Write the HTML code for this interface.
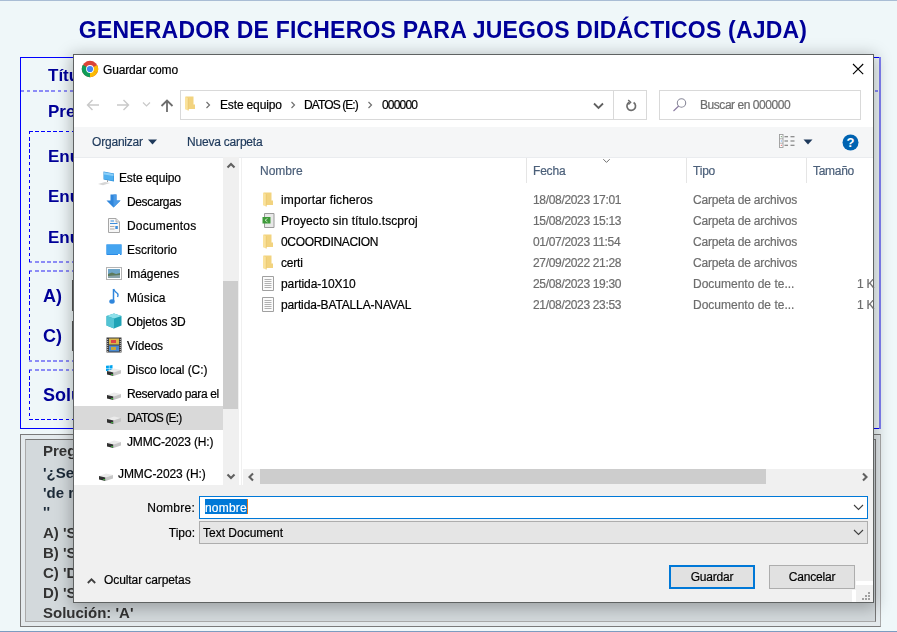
<!DOCTYPE html>
<html><head><meta charset="utf-8">
<style>
*{margin:0;padding:0;box-sizing:border-box}
html,body{width:897px;height:632px;overflow:hidden}
body{position:relative;background:#eff7f9;font-family:"Liberation Sans",sans-serif}
.a{position:absolute}
.gb{will-change:transform;font-size:15px;font-weight:bold;line-height:16px;white-space:nowrap}
.pg{will-change:transform;font-weight:bold;color:#000099;white-space:nowrap}
.t{will-change:transform;-webkit-text-stroke:0.2px currentColor;font-size:12px;line-height:16px;white-space:nowrap;color:#000}
.dlg{font-family:"Liberation Sans",sans-serif;font-size:12px;white-space:nowrap;color:#000}
</style></head><body>
<!-- background page -->
<div class="a" style="left:0;top:0;width:897px;height:1px;background:#a9bdd5"></div>
<div class="a pg" style="left:0;top:17px;width:886px;text-align:center;font-size:23px;line-height:26px;letter-spacing:0.2px">GENERADOR DE FICHEROS PARA JUEGOS DIDÁCTICOS (AJDA)</div>
<div class="a" style="left:20px;top:57px;width:860px;height:372px;border:1px solid #0000ff;border-right:none"></div>
<div class="a" style="left:879px;top:57px;width:2px;height:372px;background:#8080f4"></div>
<div class="a pg" style="left:48px;top:66px;font-size:17px">Títu</div>
<div class="a" style="left:21px;top:90px;width:859px;height:2px;background:repeating-linear-gradient(90deg,#8c8cf6 0 3.4px,transparent 3.4px 6.1px)"></div>
<div class="a pg" style="left:48px;top:102px;font-size:17px">Pre</div>
<div class="a" style="left:29px;top:131px;width:845px;height:1px;background:repeating-linear-gradient(90deg,#0000ff 0 3.6px,transparent 3.6px 6.1px)"></div>
<div class="a" style="left:29px;top:261px;width:845px;height:2px;background:repeating-linear-gradient(90deg,#8c8cf6 0 3.4px,transparent 3.4px 6.1px)"></div>
<div class="a" style="left:29px;top:131px;width:1px;height:131px;background:repeating-linear-gradient(180deg,#0000ff 0 3.4px,transparent 3.4px 6.1px)"></div>
<div class="a" style="left:873px;top:131px;width:1px;height:131px;background:repeating-linear-gradient(180deg,#0000ff 0 3.4px,transparent 3.4px 6.1px)"></div>
<div class="a pg" style="left:48px;top:147px;font-size:17px">Enu</div>
<div class="a pg" style="left:48px;top:187px;font-size:17px">Enu</div>
<div class="a pg" style="left:48px;top:228px;font-size:17px">Enu</div>
<div class="a" style="left:29px;top:270px;width:845px;height:2px;background:repeating-linear-gradient(90deg,#8c8cf6 0 3.4px,transparent 3.4px 6.1px)"></div>
<div class="a" style="left:29px;top:360px;width:845px;height:2px;background:repeating-linear-gradient(90deg,#8c8cf6 0 3.4px,transparent 3.4px 6.1px)"></div>
<div class="a" style="left:29px;top:271px;width:1px;height:90px;background:repeating-linear-gradient(180deg,#0000ff 0 3.4px,transparent 3.4px 6.1px)"></div>
<div class="a" style="left:873px;top:271px;width:1px;height:90px;background:repeating-linear-gradient(180deg,#0000ff 0 3.4px,transparent 3.4px 6.1px)"></div>
<div class="a pg" style="left:43px;top:286px;font-size:18px">A)</div>
<div class="a pg" style="left:43px;top:326px;font-size:18px">C)</div>
<div class="a" style="left:72px;top:280px;width:2px;height:31px;background:#555"></div>
<div class="a" style="left:72px;top:321px;width:2px;height:30px;background:#555"></div>
<div class="a" style="left:29px;top:369px;width:845px;height:2px;background:repeating-linear-gradient(90deg,#8c8cf6 0 3.4px,transparent 3.4px 6.1px)"></div>
<div class="a" style="left:29px;top:419px;width:845px;height:1px;background:repeating-linear-gradient(90deg,#0000ff 0 3.6px,transparent 3.6px 6.1px)"></div>
<div class="a" style="left:29px;top:370px;width:1px;height:50px;background:repeating-linear-gradient(180deg,#0000ff 0 3.4px,transparent 3.4px 6.1px)"></div>
<div class="a" style="left:873px;top:370px;width:1px;height:50px;background:repeating-linear-gradient(180deg,#0000ff 0 3.4px,transparent 3.4px 6.1px)"></div>
<div class="a pg" style="left:43px;top:385px;font-size:18px">Solu</div>
<!-- gray box -->
<div class="a" style="left:20px;top:434px;width:861px;height:193px;border:1px solid #7a7a7a;border-right-color:#aaa;background:#e4eaed"></div>
<div class="a" style="left:25px;top:439px;width:851px;height:183px;border:1px solid #aaa;border-top-color:#777;border-right-color:#777;background:#d3d9dc"></div>
<div class="a gb" style="left:43px;top:443px;color:#333">Preg</div>
<div class="a gb" style="left:43px;top:465px;color:#1c2a38">'¿Se</div>
<div class="a gb" style="left:43px;top:485px;color:#1c2a38">'de r</div>
<div class="a gb" style="left:43px;top:504px;color:#1c2a38">''</div>
<div class="a gb" style="left:43px;top:525px;color:#333">A) 'S</div>
<div class="a gb" style="left:43px;top:545px;color:#333">B) 'S</div>
<div class="a gb" style="left:43px;top:565px;color:#333">C) 'D</div>
<div class="a gb" style="left:43px;top:585px;color:#333">D) 'S</div>
<div class="a gb" style="left:43px;top:605px;color:#333">Solución: 'A'</div>
<div class="a" style="left:0;top:631px;width:897px;height:1px;background:#7d9cc0"></div>
<!-- dialog -->
<div class="a" style="left:73px;top:54px;width:801px;height:549px;background:#fff;border:1px solid #5f6262;box-shadow:0 3px 15px 2px rgba(0,0,0,0.27)"></div>
<!-- title bar -->
<svg class="a" style="left:81px;top:60px" width="18" height="18" viewBox="0 0 18 18">
  <circle cx="9" cy="9" r="8.2" fill="#db4437"/>
  <path d="M9 9 L16.1 13.1 A8.2 8.2 0 0 1 9 17.2 Z" fill="#fbbc05"/>
  <path d="M9 9 L9 17.2 A8.2 8.2 0 0 1 1.9 13.1 L1.9 4.9 Z" fill="#0f9d58"/>
  <path d="M9 9 L1.9 4.9 A8.2 8.2 0 0 0 1.9 13.1 Z" fill="#0f9d58"/>
  <path d="M9 9 L16.1 4.9 A8.2 8.2 0 0 1 16.1 13.1 Z" fill="#fbbc05"/>
  <circle cx="9" cy="9" r="3.9" fill="#fff"/>
  <circle cx="9" cy="9" r="3.1" fill="#4285f4"/>
</svg>
<div class="a t" style="left:103px;top:62px;letter-spacing:-0.15px">Guardar como</div>
<svg class="a" style="left:852px;top:63px" width="12" height="12" viewBox="0 0 12 12"><path d="M1 1L11.2 11.2M11.2 1L1 11.2" stroke="#000" stroke-width="1.1"/></svg>
<!-- address row -->
<svg class="a" style="left:86px;top:99px" width="14" height="12" viewBox="0 0 14 12"><path d="M13 6H1.5M6.5 1L1.5 6L6.5 11" stroke="#c9c9c9" stroke-width="1.4" fill="none"/></svg>
<svg class="a" style="left:116px;top:99px" width="14" height="12" viewBox="0 0 14 12"><path d="M1 6H12.5M7.5 1L12.5 6L7.5 11" stroke="#c9c9c9" stroke-width="1.4" fill="none"/></svg>
<svg class="a" style="left:142px;top:101px" width="9" height="7" viewBox="0 0 9 7"><path d="M1 1.5L4.5 5L8 1.5" stroke="#c9c9c9" stroke-width="1.2" fill="none"/></svg>
<svg class="a" style="left:160px;top:99px" width="14" height="14" viewBox="0 0 14 14"><path d="M7 13V1.5M1.5 7L7 1.5L12.5 7" stroke="#6d6d6d" stroke-width="1.8" fill="none"/></svg>
<div class="a" style="left:180px;top:90px;width:467px;height:30px;border:1px solid #d9d9d9"></div>
<div class="a" style="left:613px;top:91px;width:1px;height:28px;background:#d9d9d9"></div>
<svg class="a" style="left:184px;top:96px" width="12" height="15" viewBox="0 0 12 15"><path d="M1.5 0.5H9.5V8.5H11V13H1.5Z" fill="#f2d37f"/><path d="M1 0.8L4.3 2.2V14.5L1 13.3Z" fill="#fae29c"/><path d="M4.3 2.2V14.5" stroke="#e8c468" stroke-width="0.7"/></svg>
<svg class="a" style="left:205px;top:101px" width="6" height="8" viewBox="0 0 6 8"><path d="M1.5 1L4.5 4L1.5 7" stroke="#707070" stroke-width="1.2" fill="none"/></svg>
<div class="a t" style="left:220px;top:97px;letter-spacing:-0.15px">Este equipo</div>
<svg class="a" style="left:290px;top:101px" width="6" height="8" viewBox="0 0 6 8"><path d="M1.5 1L4.5 4L1.5 7" stroke="#707070" stroke-width="1.2" fill="none"/></svg>
<div class="a t" style="left:304px;top:97px;letter-spacing:-0.9px">DATOS (E:)</div>
<svg class="a" style="left:367px;top:101px" width="6" height="8" viewBox="0 0 6 8"><path d="M1.5 1L4.5 4L1.5 7" stroke="#707070" stroke-width="1.2" fill="none"/></svg>
<div class="a t" style="left:382px;top:97px;letter-spacing:-0.8px">000000</div>
<svg class="a" style="left:593px;top:102px" width="11" height="8" viewBox="0 0 11 8"><path d="M1 1.5L5.5 6L10 1.5" stroke="#606060" stroke-width="1.8" fill="none"/></svg>
<svg class="a" style="left:624px;top:99px" width="14" height="14" viewBox="0 0 14 14"><path d="M5.2 3.3A4.3 4.3 0 1 0 9.6 3.5" stroke="#6d6d6d" stroke-width="1.7" fill="none"/><path d="M4.2 1L6.6 3.2L4.4 5.6" stroke="#6d6d6d" stroke-width="1.5" fill="none"/></svg>
<div class="a" style="left:659px;top:90px;width:202px;height:30px;border:1px solid #d9d9d9"></div>
<svg class="a" style="left:672px;top:97px" width="15" height="15" viewBox="0 0 15 15"><circle cx="9.5" cy="6" r="4.2" stroke="#8a8a9a" stroke-width="1.1" fill="none"/><path d="M6.7 9L1.5 14" stroke="#8a7aa0" stroke-width="1.1"/></svg>
<div class="a t" style="left:700px;top:97px;color:#6d6d6d;letter-spacing:-0.45px">Buscar en 000000</div>
<!-- command bar -->
<div class="a" style="left:74px;top:127px;width:799px;height:30px;background:#f5f6f7"></div>
<div class="a" style="left:74px;top:157px;width:799px;height:1px;background:#eaecef"></div>
<div class="a t" style="left:92px;top:134px;color:#1e395b;letter-spacing:-0.2px">Organizar</div>
<svg class="a" style="left:148px;top:139px" width="9" height="6" viewBox="0 0 9 6"><path d="M0 0.5H9L4.5 5.5Z" fill="#1e395b"/></svg>
<div class="a t" style="left:187px;top:134px;color:#1e395b;letter-spacing:-0.2px">Nueva carpeta</div>
<svg class="a" style="left:778px;top:134px" width="18" height="14" viewBox="0 0 18 14"><rect x="1.5" y="0.5" width="3.5" height="13" fill="#fff" stroke="#9c9c9c" stroke-width="0.9"/><path d="M1.5 4.8H5M1.5 9.2H5" stroke="#9c9c9c" stroke-width="0.8"/><rect x="2.8" y="2.2" width="1" height="1" fill="#4a8a4a"/><rect x="2.8" y="6.5" width="1" height="1" fill="#4a8ae0"/><rect x="2.8" y="10.8" width="1" height="1" fill="#e04a4a"/><path d="M6.5 2.7H10M12.5 2.7H16.5M6.5 7H10M12.5 7H16.5M6.5 11.3H10M12.5 11.3H16.5" stroke="#6e6e6e" stroke-width="1.1"/></svg>
<svg class="a" style="left:803px;top:139px" width="10" height="6" viewBox="0 0 10 6"><path d="M0.5 0.5H9.5L5 5.5Z" fill="#1e395b"/></svg>
<svg class="a" style="left:842px;top:134px" width="17" height="17" viewBox="0 0 17 17"><circle cx="8.5" cy="8.5" r="8" fill="#0063b1"/><text x="8.5" y="13.3" font-family="Liberation Sans" font-weight="bold" font-size="13" fill="#fff" text-anchor="middle">?</text></svg>
<!-- header row -->
<div class="a t" style="left:260px;top:163px;color:#4c607a;letter-spacing:0px">Nombre</div>
<div class="a" style="left:526px;top:158px;width:1px;height:25px;background:#e5e5e5"></div>
<svg class="a" style="left:602px;top:158px" width="9" height="6" viewBox="0 0 9 6"><path d="M1.3 1.2L4.5 4.4L7.7 1.2" stroke="#707070" stroke-width="1" fill="none"/></svg>
<div class="a t" style="left:533px;top:163px;color:#4c607a;letter-spacing:-0.2px">Fecha</div>
<div class="a" style="left:686px;top:158px;width:1px;height:25px;background:#e5e5e5"></div>
<div class="a t" style="left:693px;top:163px;color:#4c607a;letter-spacing:-0.2px">Tipo</div>
<div class="a" style="left:806px;top:158px;width:1px;height:25px;background:#e5e5e5"></div>
<div class="a t" style="left:813px;top:163px;color:#4c607a;letter-spacing:-0.3px">Tamaño</div>
<!-- nav pane -->
<div class="a" style="left:74px;top:406px;width:149px;height:24px;background:#d9d9d9"></div>
<div class="a t" style="left:119px;top:170px;letter-spacing:-0.15px">Este equipo</div>
<svg class="a" style="left:97px;top:170px" width="18" height="16" viewBox="0 0 18 16"><path d="M6.5 1.5L17 3.5V11.5L6.5 9.5Z" fill="#2f8fd8"/><path d="M7 2.2L16.5 4V10.8L7 9Z" fill="#4fb0f0"/><path d="M7 2.2L16.5 4V6L7 4.5Z" fill="#8ccff8"/><path d="M10.5 10.2V12" stroke="#9a9a9a" stroke-width="1"/><path d="M1 14L8 12L13 13L6 15.3Z" fill="#d6d6d6"/></svg>
<div class="a t" style="left:127px;top:194px;letter-spacing:-0.36px">Descargas</div>
<svg class="a" style="left:106px;top:194px" width="15" height="14" viewBox="0 0 15 14"><path d="M4.5 0.5H10.5V6.5H14.5L7.5 13.5L0.5 6.5H4.5Z" fill="#2f86dc"/><path d="M7.5 0.5H10.5V6.5H14.5L7.5 13.5Z" fill="#4a9ae6"/></svg>
<div class="a t" style="left:127px;top:218px;letter-spacing:0.2px">Documentos</div>
<svg class="a" style="left:107px;top:218px" width="13" height="15" viewBox="0 0 13 15"><path d="M1.5 0.5H9L12.5 4V14.5H1.5Z" fill="#f7f7f7" stroke="#a6a6a6"/><path d="M9 0.5V4H12.5" fill="#e0e0e0" stroke="#a6a6a6" stroke-width="0.8"/><path d="M3.5 3H7M3 5.5H10.5" stroke="#3b8ddd" stroke-width="1.1"/><path d="M3 8.5H7.5M3 11H7.5" stroke="#a0a0a0" stroke-width="0.9"/><rect x="8.3" y="8" width="2.5" height="3" fill="#3b8ddd"/></svg>
<div class="a t" style="left:127px;top:242px;letter-spacing:0px">Escritorio</div>
<svg class="a" style="left:106px;top:244px" width="16" height="12" viewBox="0 0 16 12"><rect x="0.5" y="0.5" width="15" height="10.5" fill="#2b8be6"/><rect x="0.5" y="0.5" width="15" height="9.5" fill="#44a4f0"/><rect x="12" y="10" width="2" height="1" fill="#fff"/></svg>
<div class="a t" style="left:127px;top:266px;letter-spacing:-0.07px">Imágenes</div>
<svg class="a" style="left:106px;top:267px" width="16" height="13" viewBox="0 0 16 13"><rect x="0.5" y="0.5" width="15" height="12" fill="#fff" stroke="#b4b4b4"/><rect x="2" y="2" width="12" height="9" fill="#6fa6c8"/><path d="M2 7L6 5.5L10 7L14 6V11H2Z" fill="#5d7a5a"/><path d="M2 9L14 8V11H2Z" fill="#8aa3a8"/></svg>
<div class="a t" style="left:127px;top:290px;letter-spacing:0.08px">Música</div>
<svg class="a" style="left:109px;top:288px" width="10" height="17" viewBox="0 0 10 17"><path d="M4.5 1V13" stroke="#2f86dc" stroke-width="1.5"/><ellipse cx="3" cy="13.5" rx="2.7" ry="2.2" fill="#2f86dc"/><path d="M4.5 1Q6 4 8.5 5.5Q9.5 7 8.5 9" stroke="#2f86dc" stroke-width="1.4" fill="none"/></svg>
<div class="a t" style="left:127px;top:314px;letter-spacing:-0.15px">Objetos 3D</div>
<svg class="a" style="left:106px;top:313px" width="16" height="16" viewBox="0 0 16 16"><path d="M8 0.5L15.5 3V12.5L8 15.5L0.5 12.5V3Z" fill="#1fa3b6"/><path d="M0.5 3L8 5.5L15.5 3L8 0.5Z" fill="#8ee0ea"/><path d="M8 5.5V15.5L0.5 12.5V3Z" fill="#53c4d4"/></svg>
<div class="a t" style="left:127px;top:338px;letter-spacing:-0.25px">Vídeos</div>
<svg class="a" style="left:106px;top:337px" width="16" height="16" viewBox="0 0 16 16"><rect x="0.5" y="0.5" width="15" height="15" fill="#3c3c3c"/><rect x="3" y="1.5" width="10" height="6" fill="#d9b74a"/><rect x="3" y="8.5" width="10" height="6" fill="#4a8ad0"/><rect x="5" y="3" width="5" height="3" fill="#d44"/><rect x="5" y="10" width="5" height="3" fill="#c6a63a"/><path d="M1.7 2V15M14.3 2V15" stroke="#ddd" stroke-width="0.9" stroke-dasharray="1 1"/></svg>
<div class="a t" style="left:127px;top:362px;letter-spacing:-0.06px">Disco local (C:)</div>
<svg class="a" style="left:106px;top:365px" width="7" height="7" viewBox="0 0 7 7"><path d="M0 0.8L2.9 0.5V3.1H0ZM3.4 0.4L6.5 0V3.1H3.4ZM0 3.6H2.9V6.2L0 5.9ZM3.4 3.6H6.5V6.8L3.4 6.4Z" fill="#00a4ef"/></svg>
<svg class="a" style="left:105px;top:366px" width="17" height="11" viewBox="0 0 17 11"><path d="M2 5L9 2.5L16 4L8.5 6.5Z" fill="#ebebeb"/><path d="M2 5L8.5 6.5V10L2 8.5Z" fill="#303030"/><path d="M8.5 6.5L16 4V7.5L8.5 10Z" fill="#c6c6c6"/><rect x="6.3" y="8" width="1.6" height="1.2" fill="#3fbf3f"/></svg>
<div class="a t" style="left:127px;top:386px;letter-spacing:-0.37px">Reservado para el</div>
<svg class="a" style="left:105px;top:390px" width="17" height="11" viewBox="0 0 17 11"><path d="M2 5L9 2.5L16 4L8.5 6.5Z" fill="#ebebeb"/><path d="M2 5L8.5 6.5V10L2 8.5Z" fill="#303030"/><path d="M8.5 6.5L16 4V7.5L8.5 10Z" fill="#c6c6c6"/><rect x="6.3" y="8" width="1.6" height="1.2" fill="#3fbf3f"/></svg>
<div class="a t" style="left:127px;top:410px;letter-spacing:-0.85px">DATOS (E:)</div>
<svg class="a" style="left:105px;top:414px" width="17" height="11" viewBox="0 0 17 11"><path d="M2 5L9 2.5L16 4L8.5 6.5Z" fill="#ebebeb"/><path d="M2 5L8.5 6.5V10L2 8.5Z" fill="#303030"/><path d="M8.5 6.5L16 4V7.5L8.5 10Z" fill="#c6c6c6"/><rect x="6.3" y="8" width="1.6" height="1.2" fill="#3fbf3f"/></svg>
<div class="a t" style="left:127px;top:434px;letter-spacing:-0.17px">JMMC-2023 (H:)</div>
<svg class="a" style="left:105px;top:438px" width="17" height="11" viewBox="0 0 17 11"><path d="M2 5L9 2.5L16 4L8.5 6.5Z" fill="#ebebeb"/><path d="M2 5L8.5 6.5V10L2 8.5Z" fill="#303030"/><path d="M8.5 6.5L16 4V7.5L8.5 10Z" fill="#c6c6c6"/><rect x="6.3" y="8" width="1.6" height="1.2" fill="#3fbf3f"/></svg>
<div class="a t" style="left:118px;top:466px;letter-spacing:-0.07px">JMMC-2023 (H:)</div>
<svg class="a" style="left:97px;top:471px" width="17" height="11" viewBox="0 0 17 11"><path d="M2 5L9 2.5L16 4L8.5 6.5Z" fill="#ebebeb"/><path d="M2 5L8.5 6.5V10L2 8.5Z" fill="#303030"/><path d="M8.5 6.5L16 4V7.5L8.5 10Z" fill="#c6c6c6"/><rect x="6.3" y="8" width="1.6" height="1.2" fill="#3fbf3f"/></svg>
<div class="a" style="left:223px;top:157px;width:16px;height:328px;background:#f0f0f0"></div>
<div class="a" style="left:223px;top:281px;width:15px;height:128px;background:#cdcdcd"></div>
<svg class="a" style="left:225px;top:161px" width="12" height="9" viewBox="0 0 12 9"><path d="M2.5 6.5L6 3L9.5 6.5" stroke="#606060" stroke-width="2.1" fill="none"/></svg>
<svg class="a" style="left:225px;top:472px" width="12" height="9" viewBox="0 0 12 9"><path d="M2.5 2.5L6 6L9.5 2.5" stroke="#606060" stroke-width="2.1" fill="none"/></svg>
<div class="a" style="left:241px;top:158px;width:1px;height:327px;background:#f0f0f0"></div>
<!-- file list -->
<svg class="a" style="left:262px;top:192px" width="12" height="15" viewBox="0 0 12 15"><path d="M1.5 0.5H9.5V8.5H11V13H1.5Z" fill="#f2d37f"/><path d="M1 0.8L4.3 2.2V14.5L1 13.3Z" fill="#fae29c"/><path d="M4.3 2.2V14.5" stroke="#e8c468" stroke-width="0.7"/></svg>
<div class="a t" style="left:281px;top:192px;letter-spacing:0.15px">importar ficheros</div>
<div class="a t" style="left:533px;top:192px;color:#6d6d6d;letter-spacing:-0.33px">18/08/2023 17:01</div>
<div class="a t" style="left:693px;top:192px;color:#6d6d6d;letter-spacing:-0.17px">Carpeta de archivos</div>
<svg class="a" style="left:262px;top:213px" width="13" height="15" viewBox="0 0 13 15"><path d="M2.5 0.5H12V14.5H2.5Z" fill="#e8e8e8" stroke="#9a9a9a"/><rect x="0.5" y="4" width="8" height="6.5" fill="#3e9a3a"/><path d="M5.5 5.5L3 7.2L5.5 9" stroke="#c9e8c0" stroke-width="0.9" fill="none"/></svg>
<div class="a t" style="left:281px;top:213px;letter-spacing:0.1px">Proyecto sin título.tscproj</div>
<div class="a t" style="left:533px;top:213px;color:#6d6d6d;letter-spacing:-0.33px">15/08/2023 15:13</div>
<div class="a t" style="left:693px;top:213px;color:#6d6d6d;letter-spacing:-0.17px">Carpeta de archivos</div>
<svg class="a" style="left:262px;top:234px" width="12" height="15" viewBox="0 0 12 15"><path d="M1.5 0.5H9.5V8.5H11V13H1.5Z" fill="#f2d37f"/><path d="M1 0.8L4.3 2.2V14.5L1 13.3Z" fill="#fae29c"/><path d="M4.3 2.2V14.5" stroke="#e8c468" stroke-width="0.7"/></svg>
<div class="a t" style="left:281px;top:234px;letter-spacing:-0.32px">0COORDINACION</div>
<div class="a t" style="left:533px;top:234px;color:#6d6d6d;letter-spacing:-0.33px">01/07/2023 11:54</div>
<div class="a t" style="left:693px;top:234px;color:#6d6d6d;letter-spacing:-0.17px">Carpeta de archivos</div>
<svg class="a" style="left:262px;top:255px" width="12" height="15" viewBox="0 0 12 15"><path d="M1.5 0.5H9.5V8.5H11V13H1.5Z" fill="#f2d37f"/><path d="M1 0.8L4.3 2.2V14.5L1 13.3Z" fill="#fae29c"/><path d="M4.3 2.2V14.5" stroke="#e8c468" stroke-width="0.7"/></svg>
<div class="a t" style="left:281px;top:255px;letter-spacing:-0.2px">certi</div>
<div class="a t" style="left:533px;top:255px;color:#6d6d6d;letter-spacing:-0.33px">27/09/2022 21:28</div>
<div class="a t" style="left:693px;top:255px;color:#6d6d6d;letter-spacing:-0.17px">Carpeta de archivos</div>
<svg class="a" style="left:262px;top:276px" width="12" height="15" viewBox="0 0 12 15"><path d="M0.5 0.5H11.5V14.5H0.5Z" fill="#fbfbfb" stroke="#a0a0a0"/><path d="M2.5 3.5H9.5M2.5 5.5H9.5M2.5 7.5H9.5M2.5 9.5H9.5M2.5 11.5H9.5" stroke="#a8a8a8" stroke-width="0.9"/></svg>
<div class="a t" style="left:281px;top:276px;letter-spacing:-0.05px">partida-10X10</div>
<div class="a t" style="left:533px;top:276px;color:#6d6d6d;letter-spacing:-0.33px">25/08/2023 19:30</div>
<div class="a t" style="left:693px;top:276px;color:#6d6d6d;letter-spacing:0px">Documento de te...</div>
<div class="a t" style="left:857px;top:276px;color:#6d6d6d;letter-spacing:-0.2px">1 K</div>
<svg class="a" style="left:262px;top:297px" width="12" height="15" viewBox="0 0 12 15"><path d="M0.5 0.5H11.5V14.5H0.5Z" fill="#fbfbfb" stroke="#a0a0a0"/><path d="M2.5 3.5H9.5M2.5 5.5H9.5M2.5 7.5H9.5M2.5 9.5H9.5M2.5 11.5H9.5" stroke="#a8a8a8" stroke-width="0.9"/></svg>
<div class="a t" style="left:281px;top:297px;letter-spacing:-0.14px">partida-BATALLA-NAVAL</div>
<div class="a t" style="left:533px;top:297px;color:#6d6d6d;letter-spacing:-0.33px">21/08/2023 23:53</div>
<div class="a t" style="left:693px;top:297px;color:#6d6d6d;letter-spacing:0px">Documento de te...</div>
<div class="a t" style="left:857px;top:297px;color:#6d6d6d;letter-spacing:-0.2px">1 K</div>
<div class="a" style="left:243px;top:469px;width:630px;height:16px;background:#f0f0f0"></div>
<div class="a" style="left:260px;top:469px;width:506px;height:15px;background:#cdcdcd"></div>
<svg class="a" style="left:246px;top:471px" width="10" height="12" viewBox="0 0 10 12"><path d="M7 2.5L3.5 6L7 9.5" stroke="#606060" stroke-width="2.1" fill="none"/></svg>
<svg class="a" style="left:860px;top:471px" width="10" height="12" viewBox="0 0 10 12"><path d="M3 2.5L6.5 6L3 9.5" stroke="#606060" stroke-width="2.1" fill="none"/></svg>
<!-- bottom -->
<div class="a" style="left:74px;top:485px;width:799px;height:117px;background:#f0f0f0"></div>
<div class="a t" style="left:140px;top:500px;width:55px;text-align:right;letter-spacing:0.25px">Nombre:</div>
<div class="a t" style="left:140px;top:525px;width:55px;text-align:right;letter-spacing:0px">Tipo:</div>
<div class="a" style="left:199px;top:496px;width:669px;height:23px;border:1px solid #0078d7;background:#fff"></div>
<div class="a" style="left:205px;top:499px;width:42px;height:15px;background:#0078d7"></div>
<div class="a" style="left:247px;top:499px;width:1px;height:15px;background:#e87a1c"></div>
<div class="a t" style="left:205px;top:500px;color:#fff;letter-spacing:0.2px">nombre</div>
<svg class="a" style="left:853px;top:504px" width="11" height="7" viewBox="0 0 11 7"><path d="M1 1L5.5 5.5L10 1" stroke="#404040" stroke-width="1.1" fill="none"/></svg>
<div class="a" style="left:199px;top:521px;width:669px;height:23px;border:1px solid #adadad;background:#e5e5e5"></div>
<div class="a t" style="left:203px;top:525px;letter-spacing:0px">Text Document</div>
<svg class="a" style="left:853px;top:529px" width="11" height="7" viewBox="0 0 11 7"><path d="M1 1L5.5 5.5L10 1" stroke="#404040" stroke-width="1.1" fill="none"/></svg>
<svg class="a" style="left:86px;top:576px" width="11" height="9" viewBox="0 0 11 9"><path d="M1.8 7L5.5 3.3L9.2 7" stroke="#404040" stroke-width="1.8" fill="none"/></svg>
<div class="a t" style="left:104px;top:572px;letter-spacing:-0.09px">Ocultar carpetas</div>
<div class="a" style="left:669px;top:565px;width:86px;height:24px;border:2px solid #0078d7;background:#e1e1e1"></div>
<div class="a t" style="left:669px;top:569px;width:86px;text-align:center;letter-spacing:-0.2px">Guardar</div>
<div class="a" style="left:769px;top:565px;width:86px;height:24px;border:1px solid #adadad;background:#e1e1e1"></div>
<div class="a t" style="left:769px;top:569px;width:86px;text-align:center;letter-spacing:-0.2px">Cancelar</div>
<div class="a" style="left:856px;top:581px;width:17px;height:4px;background:#fff"></div>
<div class="a" style="left:852px;top:590px;width:4px;height:12px;background:#fff"></div>
<svg class="a" style="left:861px;top:591px" width="10" height="9" viewBox="0 0 10 9"><path d="M7 1h2v2h-2zM4 4h2v2h-2zM7 4h2v2h-2zM1 7h2v2h-2zM4 7h2v2h-2zM7 7h2v2h-2z" fill="#a0a0a0"/></svg>
</body></html>
